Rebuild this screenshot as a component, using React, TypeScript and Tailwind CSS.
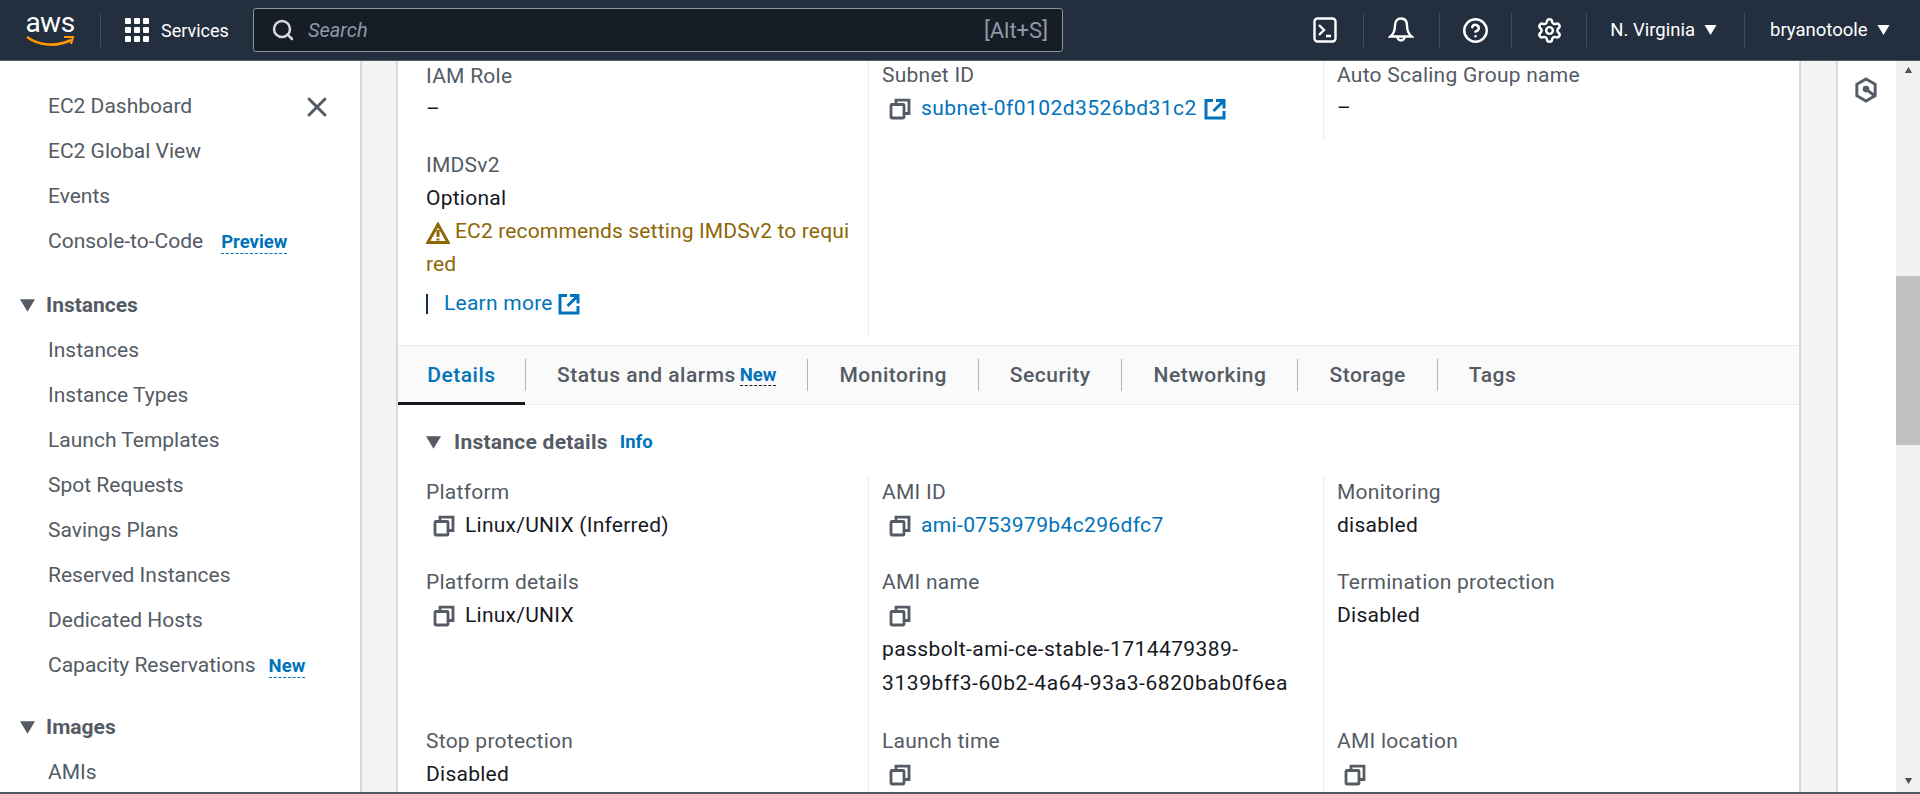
import type { ReactNode } from "react";
import { CircleHelp, Settings, Search, X } from "lucide-react";

const navTop = ["EC2 Dashboard", "EC2 Global View", "Events"];
const navInstances = [
  "Instances",
  "Instance Types",
  "Launch Templates",
  "Spot Requests",
  "Savings Plans",
  "Reserved Instances",
  "Dedicated Hosts",
];
const tabs = ["Status and alarms", "Monitoring", "Security", "Networking", "Storage", "Tags"];

function Caret({ className }: { className: string }) {
  return (
    <svg viewBox="0 0 12 10" className={className} fill="currentColor">
      <path d="M0 0h12L6 10z" />
    </svg>
  );
}

function CopyIcon() {
  return (
    <svg viewBox="0 0 22 22" className="h-[22px] w-[22px] shrink-0 text-[#545b64]" fill="none" stroke="currentColor" strokeWidth="2.8">
      <rect x="2" y="6.5" width="13" height="13.5" rx="1" />
      <path d="M7 6.5V2.200h13v13.300h-5" />
    </svg>
  );
}

function ExternalIcon() {
  return (
    <svg viewBox="0 0 22 22" className="h-[22px] w-[22px] shrink-0 text-[#0073bb]" fill="none" stroke="currentColor" strokeWidth="3">
      <path d="M9 2.500H2v17.500h18v-7M12 2.500h8v8M20 2.500 9.500 13" />
    </svg>
  );
}

function Badge({ children, blue }: { children: ReactNode; blue?: boolean }) {
  return (
    <span
      className={
        blue
          ? "border-b border-dashed border-[#0073bb] text-[18.5px] leading-[20px] font-bold tracking-normal text-[#0073bb]"
          : "border-b border-dashed border-[#16191f] text-[18.5px] leading-[20px] font-bold tracking-normal text-[#0073bb]"
      }
    >
      {children}
    </span>
  );
}

function Field({ label, children }: { label: string; children: ReactNode }) {
  return (
    <div>
      <div className="text-[#545b64]">{label}</div>
      {children}
    </div>
  );
}

function CopyValue({ children, link }: { children: ReactNode; link?: boolean }) {
  return (
    <div className="flex h-[33px] items-center gap-[10px] pl-[7px]">
      <CopyIcon />
      <span className={link ? "tracking-[0.36px] text-[#0073bb]" : "text-[#16191f]"}>{children}</span>
    </div>
  );
}

function HeaderDivider() {
  return <div className="h-[34px] w-px bg-[#414d5c]" />;
}

export default function App() {
  return (
    <div className="flex h-[794px] flex-col overflow-hidden bg-white font-['Roboto',sans-serif] text-[21px] leading-[33px] text-[#16191f]">
      <header className="flex h-[61px] shrink-0 items-center border-b border-[#545b64] bg-[#232f3e] text-white">
        <div className="flex w-[100px] shrink-0 flex-col items-center">
          <span className="h-[20px] text-[28px] leading-[20px] font-normal tracking-[-0.5px]">aws</span>
          <svg viewBox="0 0 48 12" className="mt-[2px] h-[12px] w-[48px]" fill="none">
            <path d="M1 2c12 9 30 10 44 3" stroke="#ff9900" strokeWidth="2.600" />
            <path d="M38 2h9l-2 7" stroke="#ff9900" strokeWidth="2.200" />
          </svg>
        </div>
        <HeaderDivider />
        <div className="flex w-[152px] shrink-0 items-center pl-[24px]">
          <div className="grid grid-cols-3 gap-[3px]">
            {Array.from({ length: 9 }).map((_, i) => (
              <div key={i} className="h-[6px] w-[6px] rounded-[1px] bg-white" />
            ))}
          </div>
          <span className="ml-[12px] text-[18px]">Services</span>
        </div>
        <div className="flex h-[44px] w-[810px] shrink-0 items-center rounded-[3px] border border-[#879596] bg-[#161d26] pr-[14px] pl-[17px]">
          <Search className="h-[24px] w-[24px] text-[#d5dbdb]" strokeWidth={2.5} />
          <span className="ml-[13px] flex-1 text-[20px] text-[#8d99a8] italic">Search</span>
          <span className="text-[22px] text-[#8d99a8]">[Alt+S]</span>
        </div>
        <div className="flex h-full flex-1 items-center">
          <div className="flex w-[301px] items-center justify-end">
            <svg viewBox="0 0 24 26" className="mr-[14px] h-[26px] w-[24px]" fill="none" stroke="currentColor" strokeWidth="2.400">
              <rect x="1.500" y="1.500" width="21" height="23" rx="3" />
              <path d="M6 8l5 5-5 5M13 19h5" />
            </svg>
            <div className="ml-[12px]">
              <HeaderDivider />
            </div>
          </div>
          <div className="flex w-[76px] items-center justify-end">
            <svg viewBox="0 0 26 28" className="mr-[25px] h-[28px] w-[26px]" fill="none" stroke="currentColor" strokeWidth="2.400">
              <path d="M13 2.500c-4 0-6 3-6 7 0 4-1 8-4.500 11h21C20 17.500 19 13.500 19 9.500c0-4-2-7-6-7zM9.500 21a3.500 3.500 0 0 0 7 0" />
            </svg>
            <HeaderDivider />
          </div>
          <div className="flex w-[72px] items-center justify-end">
            <CircleHelp className="mr-[22px] h-[27px] w-[27px]" strokeWidth={2.2} />
            <HeaderDivider />
          </div>
          <div className="flex w-[75px] items-center justify-end">
            <Settings className="mr-[23px] h-[27px] w-[27px]" strokeWidth={2.2} />
            <HeaderDivider />
          </div>
          <div className="flex w-[158px] items-center justify-end">
            <span className="text-[18.5px]">N. Virginia</span>
            <Caret className="mr-[27px] ml-[9px] h-[10px] w-[13px]" />
            <HeaderDivider />
          </div>
          <div className="flex flex-1 items-center pl-[25px]">
            <span className="text-[18.5px]">bryanotoole</span>
            <Caret className="ml-[9px] h-[10px] w-[13px]" />
          </div>
        </div>
      </header>

      <main className="flex min-h-0 flex-1">
        <aside className="w-[362px] shrink-0 border-r-2 border-[#d5dbdb] pt-[23px] text-[#545b64]">
          <div className="flex h-[45px] items-center justify-between pr-[27px] pl-[48px]">
            <span>{navTop[0]}</span>
            <X className="h-[32px] w-[32px]" strokeWidth={2.2} />
          </div>
          {navTop.slice(1).map((item) => (
            <div key={item} className="flex h-[45px] items-center pl-[48px]">
              {item}
            </div>
          ))}
          <div className="flex h-[45px] items-center pl-[48px]">
            <span>Console-to-Code</span>
            <span className="ml-[18px]">
              <Badge blue>Preview</Badge>
            </span>
          </div>
          <div className="mt-[19px] flex h-[45px] items-center pl-[20px] font-bold">
            <Caret className="mr-[11px] h-[13px] w-[15px]" />
            Instances
          </div>
          {navInstances.map((item) => (
            <div key={item} className="flex h-[45px] items-center pl-[48px]">
              {item}
            </div>
          ))}
          <div className="flex h-[45px] items-center pl-[48px]">
            <span>Capacity Reservations</span>
            <span className="ml-[13px]">
              <Badge blue>New</Badge>
            </span>
          </div>
          <div className="mt-[17px] flex h-[45px] items-center pl-[20px] font-bold">
            <Caret className="mr-[11px] h-[13px] w-[15px]" />
            Images
          </div>
          <div className="flex h-[45px] items-center pl-[48px]">AMIs</div>
        </aside>

        <div className="w-[34px] shrink-0 bg-[#f2f3f3]" />

        <section className="w-[1405px] shrink-0 overflow-hidden border-x-2 border-[#d5dbdb] tracking-[0.25px]">
          <div className="-mt-[2px] grid grid-cols-[442px_455px_1fr] pl-[28px]">
            <div className="h-[276px] pt-px">
              <Field label="IAM Role">
                <div>–</div>
              </Field>
              <div className="mt-[23px]">
                <Field label="IMDSv2">
                  <div>Optional</div>
                  <div className="whitespace-nowrap tracking-[0.15px] text-[#8d6605]">
                    <svg viewBox="0 0 24 22" className="mr-[5px] -mb-[2px] inline h-[22px] w-[24px]" fill="none" stroke="currentColor" strokeWidth="3">
                      <path d="M12 2.500 1.800 20.500h20.400zM12 8v7M12 16.500v2" />
                    </svg>
                    EC2 recommends setting IMDSv2 to requi
                    <br />
                    red
                  </div>
                </Field>
              </div>
              <div className="mt-[6px] flex items-center">
                <div className="h-[20px] w-[2px] bg-[#1a2a4f]" />
                <span className="ml-[16px] text-[#0073bb]">Learn more</span>
                <span className="ml-[5px]">
                  <ExternalIcon />
                </span>
              </div>
            </div>
            <div className="h-[276px] border-l border-[#eaeded] pl-[13px]">
              <Field label="Subnet ID">
                <div className="flex h-[33px] items-center gap-[10px] pl-[7px]">
                  <CopyIcon />
                  <span className="tracking-[0.45px] text-[#0073bb]">subnet-0f0102d3526bd31c2</span>
                  <span className="-ml-[3px]">
                    <ExternalIcon />
                  </span>
                </div>
              </Field>
            </div>
            <div className="h-[80px] border-l border-[#eaeded] pl-[13px]">
              <Field label="Auto Scaling Group name">
                <div>–</div>
              </Field>
            </div>
          </div>

          <div className="mt-[10px] flex h-[60px] items-center border-y border-[#eaeded] bg-[#fafafa] font-medium tracking-[0.5px] text-[#545b64]">
            <div className="relative flex h-full w-[127px] items-center justify-center text-[#0073bb]">
              Details
              <div className="absolute right-0 -bottom-px left-0 h-[3px] bg-[#16191f]" />
            </div>
            {tabs.map((tab) => (
              <div key={tab} className="flex items-center">
                <div className="h-[32px] w-px bg-[#aab7b8]" />
                <span className="flex items-center px-[31px]">
                  {tab}
                  {tab === "Status and alarms" && (
                    <span className="ml-[4px] flex">
                      <Badge>New</Badge>
                    </span>
                  )}
                </span>
              </div>
            ))}
          </div>

          <div className="flex h-[60px] items-center pt-[14px] pl-[28px]">
            <Caret className="mr-[13px] h-[13px] w-[15px] text-[#545b64]" />
            <span className="font-bold text-[#545b64]">Instance details</span>
            <span className="ml-[12px] text-[18.5px] font-bold tracking-normal text-[#0073bb]">Info</span>
          </div>

          <div className="mt-[11px] grid grid-cols-[442px_455px_1fr] pl-[28px]">
            <div className="pb-[24px]">
              <Field label="Platform">
                <CopyValue>Linux/UNIX (Inferred)</CopyValue>
              </Field>
            </div>
            <div className="border-l border-[#eaeded] pb-[24px] pl-[13px]">
              <Field label="AMI ID">
                <CopyValue link>ami-0753979b4c296dfc7</CopyValue>
              </Field>
            </div>
            <div className="border-l border-[#eaeded] pb-[24px] pl-[13px]">
              <Field label="Monitoring">
                <div>disabled</div>
              </Field>
            </div>

            <div className="pb-[25px]">
              <Field label="Platform details">
                <CopyValue>Linux/UNIX</CopyValue>
              </Field>
            </div>
            <div className="border-l border-[#eaeded] pb-[25px] pl-[13px]">
              <Field label="AMI name">
                <CopyValue>{""}</CopyValue>
                <div className="mt-px tracking-[0.43px]">passbolt-ami-ce-stable-1714479389-</div>
                <div className="mt-px tracking-[0.58px]">3139bff3-60b2-4a64-93a3-6820bab0f6ea</div>
              </Field>
            </div>
            <div className="border-l border-[#eaeded] pb-[25px] pl-[13px]">
              <Field label="Termination protection">
                <div>Disabled</div>
              </Field>
            </div>

            <Field label="Stop protection">
              <div>Disabled</div>
            </Field>
            <div className="border-l border-[#eaeded] pl-[13px]">
              <Field label="Launch time">
                <CopyValue>{""}</CopyValue>
              </Field>
            </div>
            <div className="border-l border-[#eaeded] pl-[13px]">
              <Field label="AMI location">
                <CopyValue>{""}</CopyValue>
              </Field>
            </div>
          </div>
        </section>

        <div className="w-[35px] shrink-0 bg-[#f2f3f3]" />

        <div className="flex flex-1 justify-center border-l-2 border-[#d5dbdb] pt-[16px]">
          <svg viewBox="0 0 24 28" className="mr-[2px] h-[26px] w-[22px] text-[#545b64]" fill="none" stroke="currentColor" strokeWidth="3.200">
            <path d="M12 2 22 7.800v12.400L12 26 2 20.200V7.800z" />
            <circle cx="12" cy="13" r="2" fill="currentColor" />
            <path d="M12 13l9 7" />
          </svg>
        </div>

        <div className="flex w-[24px] shrink-0 flex-col items-center bg-[#f1f1f1]">
          <Caret className="mt-[6px] h-[6px] w-[11px] rotate-180 text-[#505050]" />
          <div className="mt-[203px] h-[169px] w-full bg-[#c1c1c1]" />
          <div className="flex-1" />
          <Caret className="mb-[8px] h-[6px] w-[11px] text-[#505050]" />
        </div>
      </main>
      <div className="h-[2px] shrink-0 bg-[#545b64]" />
    </div>
  );
}
